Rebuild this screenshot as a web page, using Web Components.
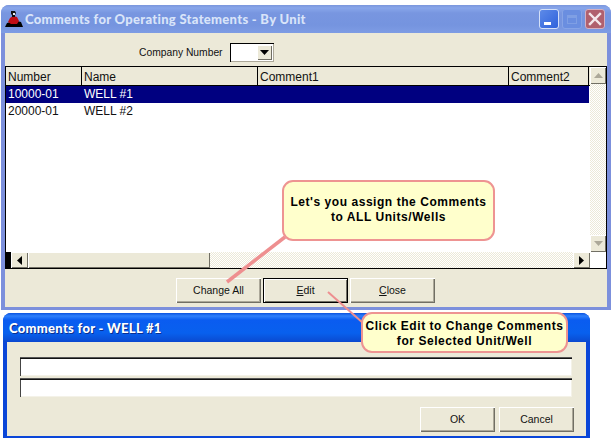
<!DOCTYPE html>
<html>
<head>
<meta charset="utf-8">
<title>Comments for Operating Statements</title>
<style>
  html, body { margin: 0; padding: 0; background: #fff; overflow: hidden; }
  body { width: 614px; height: 438px; position: relative; font-family: "Liberation Sans", Arial, sans-serif; }
  .stack { display: flex; flex-direction: column; align-items: flex-start; padding: 5px 0 0 1px; gap: 3px; }
</style>
</head>
<body>
<div class="stack">
  <xp-window inactive controls style="width:610px;height:305px">
    <svg slot="icon" width="18" height="18" viewBox="0 0 18 18">
      <path fill="#000" d="M0 17l2-4 4-1 1 2h4l1-3 4 1 2 5z"/>
      <path fill="#c00d14" d="M3 12l2-4 3-2 4 1 2 4-2 3H6z"/>
      <path fill="#111" d="M6 1h4l1 2-1 2v2H7V5L6 4z"/>
      <path fill="#eee" d="M8 3h2v2H8z"/>
    </svg>
    <span slot="title">Comments for Operating Statements - By Unit</span>
    <company-picker></company-picker>
    <unit-table></unit-table>
    <button-row style="padding:9px 0 0 171px;gap:2px">
      <xp-button style="width:85px">Change All</xp-button>
      <xp-button default style="width:85px"><u>E</u>dit</xp-button>
      <xp-button style="width:85px"><u>C</u>lose</xp-button>
    </button-row>
  </xp-window>
  <xp-window style="width:587px;height:125px;margin-left:2px">
    <span slot="title">Comments for - WELL #1</span>
    <comment-fields></comment-fields>
    <button-row style="padding:10px 12px 0 0;gap:4px;justify-content:flex-end">
      <xp-button style="width:75px">OK</xp-button>
      <xp-button style="width:75px">Cancel</xp-button>
    </button-row>
  </xp-window>
</div>

<callout-note x="282" y="180" w="213" h="61" from="3,57" to="-55,102" stroke="3.5" nudge="-1">Let's you assign the Comments<br>to ALL Units/Wells</callout-note>
<callout-note x="361" y="312" w="207" h="41" from="2,11" to="-33,-20" stroke="2" nudge="1">Click Edit to Change Comments<br>for Selected Unit/Well</callout-note>

<script>
// shared look for the scrollbar squares
const arrowBtn = `
  .arrow { width: 17px; height: 16px; box-sizing: border-box; background: #ece9d8; display: flex; align-items: center; justify-content: center;
    box-shadow: inset 1px 1px 0 #fff, inset -1px -1px 0 #716f64; flex: none; }
`;

class XpWindow extends HTMLElement {
  connectedCallback() {
    const shadow = this.attachShadow({ mode: 'open' });
    const controls = this.hasAttribute('controls') ? `
      <div class="controls">
        <div class="ctl min"><i></i></div>
        <div class="ctl max"><i></i></div>
        <div class="ctl close"><svg width="14" height="14" viewBox="0 0 14 14"><path d="M2 2l10 10M12 2L2 12" stroke="#f4e8ec" stroke-width="2.4" stroke-linecap="square"/></svg></div>
      </div>` : '';
    shadow.innerHTML = `
      <style>
        :host {
          display: flex; flex-direction: column; box-sizing: border-box;
          --edge: #0a46d8;
          --bar: linear-gradient(#0a53e0 0, #2f80fb 3px, #0a5cf0 7px, #0860ee 20px, #0a4fd6 27px, #0a46d0 100%);
          --ink: #fff;
          --ink-shadow: 1px 1px 0 #0a2f90;
          --bar-h: 29px;
          --side: 4px;
          --foot: 2px;
          --title-left: 2px;
          border-radius: 8px 8px 0 0;
          overflow: hidden;
          background: var(--edge);
        }
        :host([inactive]) {
          --edge: #7c90dc;
          --bar: linear-gradient(#7a96dc 0, #88a6ea 3px, #7896e0 8px, #7594df 20px, #7e9ce4 28px);
          --ink: #d9e4f9;
          --ink-shadow: none;
          --bar-h: 28px;
          --foot: 3px;
          --title-left: 0px;
        }
        .bar {
          height: var(--bar-h); flex: none; background: var(--bar);
          display: flex; align-items: center; gap: 2px; padding: 0 6px 0 4px; box-sizing: border-box;
        }
        .title {
          font: 900 13px Lato, "Liberation Sans", sans-serif; color: var(--ink); text-shadow: var(--ink-shadow);
          flex: 1; white-space: nowrap; letter-spacing: .3px; padding-left: var(--title-left);
        }
        ::slotted(svg) { flex: none; }
        .client {
          flex: 1; margin: 0 var(--side) var(--foot); background: #ece9d8;
          display: flex; flex-direction: column;
        }
        .controls { display: flex; gap: 3px; }
        .ctl {
          width: 20px; height: 20px; box-sizing: border-box; border: 1px solid #b5c8f0; border-radius: 3px;
          position: relative; display: flex; align-items: center; justify-content: center;
        }
        .min { background: linear-gradient(135deg, #5d8ae8, #2f62dc); border-color: #d4e0f8; }
        .min i { position: absolute; left: 4px; bottom: 3px; width: 7px; height: 3px; background: #fff; }
        .max { background: #6a8ee0; border-color: #87a4e6; }
        .max i { width: 10px; height: 9px; border: 1px solid #7f9fe4; border-top-width: 3px; box-sizing: border-box; }
        .close { background: #b0606e; border-color: #d4b0c0; }
      </style>
      <div class="bar">
        <slot name="icon"></slot>
        <div class="title"><slot name="title"></slot></div>
        ${controls}
      </div>
      <div class="client"><slot></slot></div>
    `;
  }
}

class XpButton extends HTMLElement {
  connectedCallback() {
    const shadow = this.attachShadow({ mode: 'open' });
    shadow.innerHTML = `
      <style>
        :host {
          display: flex; align-items: center; justify-content: center; box-sizing: border-box; height: 25px; flex: none; padding-bottom: 1px;
          background: #ece9d8; color: #111;
          font: 10.5px "Liberation Sans", Arial, sans-serif;
          box-shadow: inset 1px 1px 0 #fff, inset -1px -1px 0 #716f64, inset -2px -2px 0 #aca899;
        }
        :host([default]) { box-shadow: inset 0 0 0 1px #000, inset 2px 2px 0 #fff, inset -2px -2px 0 #716f64; }
      </style>
      <slot></slot>
    `;
  }
}

class ButtonRow extends HTMLElement {
  connectedCallback() {
    this.attachShadow({ mode: 'open' }).innerHTML = `
      <style>:host { display: flex; align-items: flex-start; }</style>
      <slot></slot>
    `;
  }
}

class CompanyPicker extends HTMLElement {
  connectedCallback() {
    this.attachShadow({ mode: 'open' }).innerHTML = `
      <style>
        :host { display: flex; align-items: center; height: 33px; padding: 6px 0 0 134px; box-sizing: border-box; flex: none;
          font: 10.3px "Liberation Sans", Arial, sans-serif; color: #111; }
        span { width: 91px; }
        .combo { width: 44px; height: 19px; box-sizing: border-box; background: #fff; display: flex; justify-content: flex-end; align-items: center; padding: 2px 2px 2px 0;
          box-shadow: inset 1px 1px 0 #000, inset -1px -1px 0 #aca899; }
        .btn { width: 15px; height: 15px; background: #ece9d8; box-shadow: inset 1px 1px 0 #fff, inset -1px -1px 0 #716f64; display: flex; align-items: center; justify-content: center; }
      </style>
      <span>Company Number</span>
      <div class="combo"><div class="btn"><svg width="9" height="5" viewBox="0 0 9 5"><path d="M0 0h9L4.5 5z" fill="#000"/></svg></div></div>
    `;
  }
}

class UnitTable extends HTMLElement {
  connectedCallback() {
    const rows = [['10000-01', 'WELL #1'], ['20000-01', 'WELL #2']];
    const rowHTML = rows.map((r, i) =>
      `<div class="row ${i === 0 ? 'sel' : ''}"><span>${r[0]}</span><span>${r[1]}</span><span></span><span></span></div>`
    ).join('');
    this.attachShadow({ mode: 'open' }).innerHTML = `
      <style>
        :host { display: block; height: 203px; flex: none; margin-right: 0; }
        * { box-sizing: border-box; }
        ${arrowBtn}
        .frame { height: 100%; border: 1px solid #000; display: grid; grid-template-columns: 584px 16px; grid-template-rows: 185px 16px; background: #fff;
          font: 12px "Liberation Sans", Arial, sans-serif; color: #111; }
        .cols { display: grid; grid-template-columns: 76px 176px 251px 80px; }
        .head { height: 19px; background: #ece9d8; border-bottom: 1px solid #000; width: 584px; }
        .head span { border-right: 1px solid #000; padding: 2px 0 0 2px; line-height: 16px; }
        .row { height: 17px; width: 583px; display: grid; grid-template-columns: 76px 176px 251px 80px; align-items: center; line-height: 17px; }
        .row span { padding-left: 2px; }
        .sel { background: #000080; color: #fff; }
        .vbar { display: flex; flex-direction: column; justify-content: space-between; background: repeating-conic-gradient(#ece9d8 0 25%, #fff 0 50%) 0 0 / 2px 2px; }
        .vbar .arrow { width: 16px; height: 17px; }
        .hbar { display: flex; background: repeating-conic-gradient(#ece9d8 0 25%, #fff 0 50%) 0 0 / 2px 2px; }
        .stub { width: 5px; background: #000; flex: none; }
        .thumb { width: 182px; background: #ece9d8; box-shadow: inset 1px 1px 0 #fff, inset -1px -1px 0 #716f64; flex: none; }
        .gap { flex: 1; }
        .corner { background: #fff; }
      </style>
      <div class="frame">
        <div>
          <div class="cols head"><span>Number</span><span>Name</span><span>Comment1</span><span>Comment2</span></div>
          ${rowHTML}
        </div>
        <div class="vbar">
          <div class="arrow"><svg width="9" height="5" viewBox="0 0 9 5"><path d="M4.5 0L9 5H0z" fill="#aca899"/></svg></div>
          <div class="arrow"><svg width="9" height="5" viewBox="0 0 9 5"><path d="M0 0h9L4.5 5z" fill="#aca899"/></svg></div>
        </div>
        <div class="hbar">
          <div class="stub"></div>
          <div class="arrow"><svg width="5" height="9" viewBox="0 0 5 9"><path d="M5 0v9L0 4.500z" fill="#000"/></svg></div>
          <div class="thumb"></div>
          <div class="gap"></div>
          <div class="arrow"><svg width="5" height="9" viewBox="0 0 5 9"><path d="M0 0v9l5-4.500z" fill="#000"/></svg></div>
        </div>
        <div class="corner"></div>
      </div>
    `;
  }
}

class CommentFields extends HTMLElement {
  connectedCallback() {
    this.attachShadow({ mode: 'open' }).innerHTML = `
      <style>
        :host { display: flex; flex-direction: column; gap: 2px; padding: 15px 14px 0 13px; flex: none; }
        div { height: 19px; background: #fff; box-shadow: inset 0 1px 0 #555, inset 0 2px 0 #111, inset 1px 0 0 #444, inset -1px -1px 0 #f4f2e8; }
      </style>
      <div></div><div></div>
    `;
  }
}

class CalloutNote extends HTMLElement {
  connectedCallback() {
    const a = n => this.getAttribute(n);
    const [x1, y1] = a('from').split(',').map(Number);
    const [x2, y2] = a('to').split(',').map(Number);
    const w = +a('w');
    const h = +a('h');
    const nudge = +a('nudge');
    this.attachShadow({ mode: 'open' }).innerHTML = `
      <style>
        :host { position: absolute; left: ${a('x')}px; top: ${a('y')}px; width: ${w}px; height: ${h}px; display: block; }
        svg { position: absolute; left: 0; top: 0; overflow: visible; }
        .box {
          position: absolute; inset: 0; box-sizing: border-box; background: #ffffcc; border: 2px solid #ee9492; border-radius: 11px;
          display: flex; align-items: center; justify-content: center; text-align: center;
          font: bold 12px/15px "Liberation Sans", Arial, sans-serif; letter-spacing: .55px; color: #000;
        }
        span { margin-top: ${nudge * 2}px; }
      </style>
      <svg width="${w}" height="${h}"><line x1="${x1}" y1="${y1}" x2="${x2}" y2="${y2}" stroke="#ee8f90" stroke-width="${a('stroke')}"/></svg>
      <div class="box"><span><slot></slot></span></div>
    `;
  }
}

customElements.define('xp-window', XpWindow);
customElements.define('xp-button', XpButton);
customElements.define('button-row', ButtonRow);
customElements.define('company-picker', CompanyPicker);
customElements.define('unit-table', UnitTable);
customElements.define('comment-fields', CommentFields);
customElements.define('callout-note', CalloutNote);
</script>
</body>
</html>
